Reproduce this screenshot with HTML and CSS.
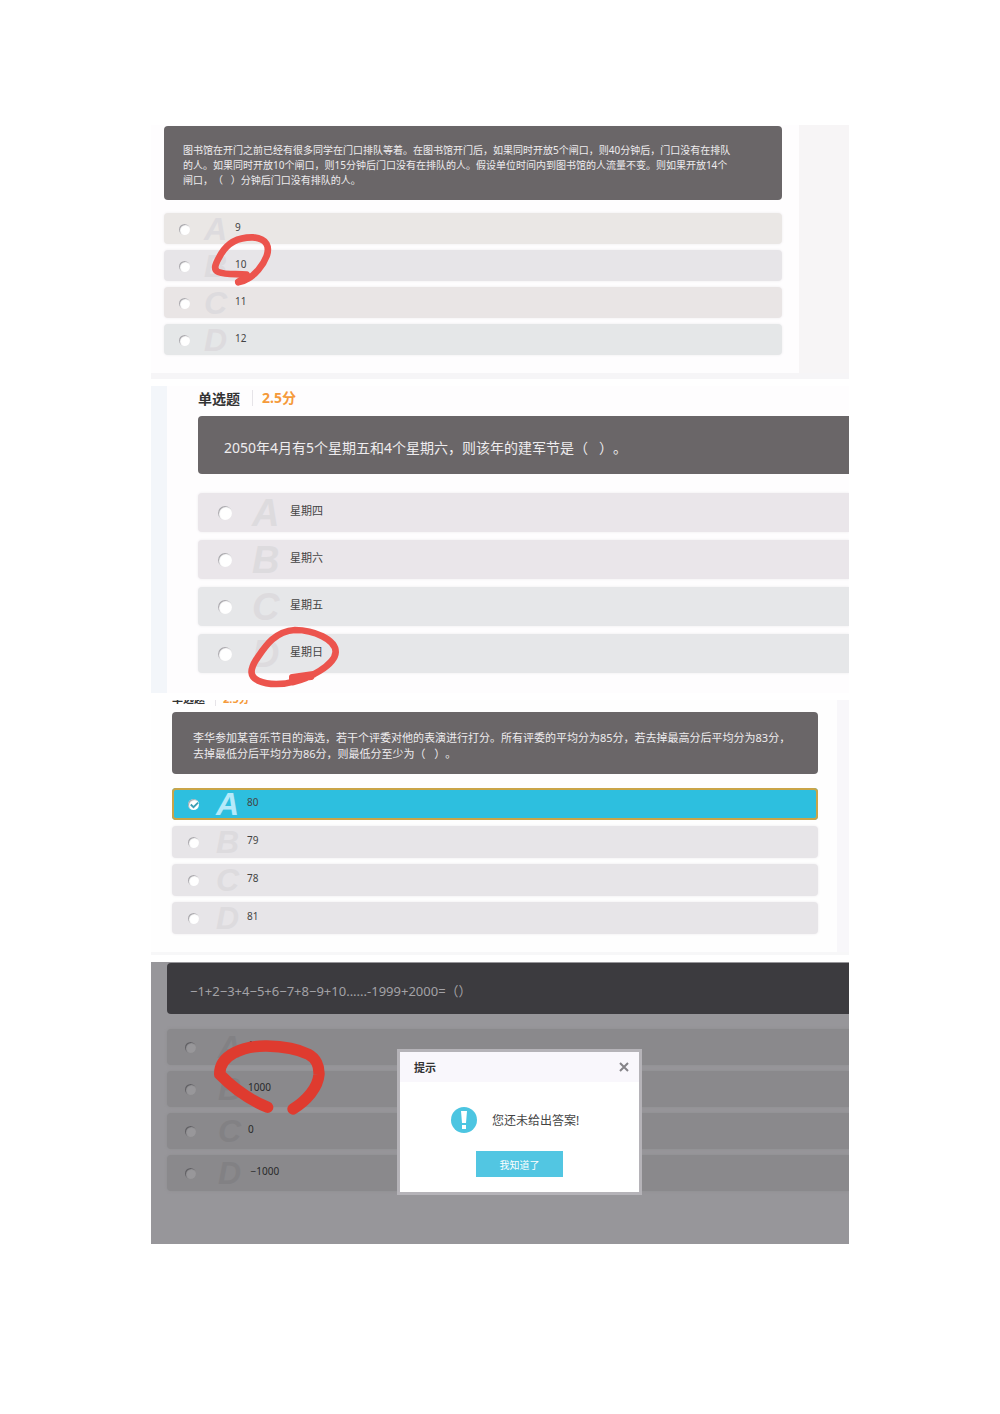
FILE: index.html
```html
<!DOCTYPE html>
<html lang="zh-CN">
<head>
  <meta charset="UTF-8">
  <title>单选题</title>
  <link rel="stylesheet" href="styles.css">
</head>
<body>

  <section class="panel panel-library">
    <div class="question">图书馆在开门之前已经有很多同学在门口排队等着。在图书馆开门后，如果同时开放5个闸口，则40分钟后，门口没有在排队<br>的人。如果同时开放10个闸口，则15分钟后门口没有在排队的人。假设单位时间内到图书馆的人流量不变。则如果开放14个<br>闸口，（&nbsp;&nbsp;&nbsp;）分钟后门口没有排队的人。</div>
    <div class="options">
      <label class="option"><input type="radio" name="q1"><span class="letter">A</span><span class="text">9</span></label>
      <label class="option"><input type="radio" name="q1"><span class="letter">B</span><span class="text">10</span></label>
      <label class="option"><input type="radio" name="q1"><span class="letter">C</span><span class="text">11</span></label>
      <label class="option"><input type="radio" name="q1"><span class="letter">D</span><span class="text">12</span></label>
    </div>
    <svg class="mark" viewBox="0 0 192 168">
      <path d="M106 128 C80 124 48 130 22 120 C2 112 18 88 30 66 C50 32 84 15 126 16 C170 20 176 46 167 72 C156 102 130 130 110 140 Q98 148 82 151"/>
      <path d="M82 149 L108 132"/>
    </svg>
  </section>

  <section class="panel panel-weekday">
    <div class="head"><span class="type">单选题</span><span class="score">2.5分</span></div>
    <div class="question">2050年4月有5个星期五和4个星期六，则该年的建军节是（&nbsp;&nbsp;&nbsp;）。</div>
    <div class="options">
      <label class="option"><input type="radio" name="q2"><span class="letter">A</span><span class="text">星期四</span></label>
      <label class="option"><input type="radio" name="q2"><span class="letter">B</span><span class="text">星期六</span></label>
      <label class="option"><input type="radio" name="q2"><span class="letter">C</span><span class="text">星期五</span></label>
      <label class="option"><input type="radio" name="q2"><span class="letter">D</span><span class="text">星期日</span></label>
    </div>
    <svg class="mark" viewBox="0 0 288 216">
      <path d="M142 172 L205 163 M142 177 L198 170 M145 186 C190 176 270 136 272 96 C272 58 206 30 150 30 C88 34 60 80 34 118 C14 150 14 170 40 182 C70 196 116 194 150 184"/>
    </svg>
  </section>

  <section class="panel panel-judges">
    <div class="head"><span class="type">单选题</span><span class="score">2.5分</span></div>
    <div class="question">李华参加某音乐节目的海选，若干个评委对他的表演进行打分。所有评委的平均分为85分，若去掉最高分后平均分为83分，<br>去掉最低分后平均分为86分，则最低分至少为（&nbsp;&nbsp;&nbsp;）。</div>
    <div class="options">
      <label class="option"><input type="radio" name="q3" checked><span class="letter">A</span><span class="text">80</span></label>
      <label class="option"><input type="radio" name="q3"><span class="letter">B</span><span class="text">79</span></label>
      <label class="option"><input type="radio" name="q3"><span class="letter">C</span><span class="text">78</span></label>
      <label class="option"><input type="radio" name="q3"><span class="letter">D</span><span class="text">81</span></label>
    </div>
  </section>

  <section class="panel panel-sum">
    <div class="question">−1+2−3+4−5+6−7+8−9+10......-1999+2000=（）</div>
    <div class="options">
      <label class="option"><input type="radio" name="q4"><span class="letter">A</span><span class="text">1</span></label>
      <label class="option"><input type="radio" name="q4"><span class="letter">B</span><span class="text">1000</span></label>
      <label class="option"><input type="radio" name="q4"><span class="letter">C</span><span class="text">0</span></label>
      <label class="option"><input type="radio" name="q4"><span class="letter">D</span><span class="text">&nbsp;−1000</span></label>
    </div>
    <svg class="mark" viewBox="0 0 360 252">
      <path d="M173 217 C120 195 70 160 29 118 C28 60 100 32 170 33 C230 34 268 44 295 58 C318 70 328 94 327 118 C324 158 290 196 249 222"/>
    </svg>

    <div class="dialog" role="dialog" aria-labelledby="dialogTitle">
      <div class="dialog-head">
        <span id="dialogTitle">提示</span>
        <button class="close-btn" type="button" aria-label="关闭">
          <svg viewBox="0 0 10 10"><path d="M1 1 L9 9 M9 1 L1 9"/></svg>
        </button>
      </div>
      <div class="dialog-body">
        <svg class="alert-icon" viewBox="0 0 26 26">
          <circle cx="13" cy="13" r="13"/>
          <path d="M10 4 H16 L15 16 H11 Z M11 18 H15 V22 H11 Z"/>
        </svg>
        <span>您还未给出答案!</span>
      </div>
      <button class="ok-btn" type="button">我知道了</button>
    </div>
  </section>

</body>
</html>
```
FILE: styles.css
```css
body {
  margin: 0;
  padding: 125px 151px 170px;
  display: flex;
  flex-direction: column;
  gap: 7px;
  background: #fff;
  color: #444;
  font-family: "Noto Sans", "Noto Sans CJK SC", sans-serif;
  text-spacing-trim: space-all;
}

.panel {
  position: relative;
  box-sizing: border-box;
  overflow: hidden;
  background: #fefdfe;
}

.question {
  background: #6a6668;
  color: #eeecee;
  border-radius: 4px;
  white-space: nowrap;
}

.head {
  display: flex;
  align-items: center;
  font-weight: bold;
  color: #333;
}

.score {
  color: #f59a3a;
  border-left: 1px solid #e6e4e8;
}

/* 选项 */
.options {
  display: grid;
  gap: 6px;
}

.option {
  display: grid;
  align-items: center;
  box-sizing: border-box;
  border-radius: 4px;
  background: #e7e5e8;
  box-shadow: 0 0 3px #eeecef;
  font-size: 10px;
}

.option input {
  appearance: none;
  width: 11px;
  height: 11px;
  margin: 1px 0 0;
  border-radius: 50%;
  background: #fff;
  box-shadow: inset 1px 1px 1px #a5a3a8;
}

.letter {
  color: #dddbde;
  font-family: "Liberation Sans", sans-serif;
  font-size: 32px;
  line-height: 30px;
  font-weight: bold;
  font-style: italic;
}

.text {
  line-height: 16px;
  padding-bottom: 4px;
}

/* 红笔圈 */
.mark {
  position: absolute;
  fill: none;
  stroke: #ec544d;
  stroke-width: 20;
  stroke-linecap: round;
  stroke-linejoin: round;
}

/* 第一题 */
.panel-library {
  padding: 1px 67px 18px 13px;
  border-bottom: 6px solid #f6f5f7;
  background: linear-gradient(to right, #fefdfe calc(100% - 50px), #f7f5f6 calc(100% - 50px));
}

.panel-library .question {
  padding: 17px 19px 12px;
  margin-bottom: 13px;
  font-size: 10px;
  line-height: 15px;
}

.panel-library .option {
  height: 31px;
  padding-left: 15px;
  grid-template-columns: 25px 31px 1fr;
}

.panel-library .option:nth-child(1) {
  background: #eae7e5;
}

.panel-library .option:nth-child(3) {
  background: #e9e5e5;
}

.panel-library .option:nth-child(4) {
  background: #e5e7e8;
}

.panel-library .mark {
  left: 60px;
  top: 107px;
  width: 64px;
  height: 56px;
}

/* 第二题 */
.panel-weekday {
  padding: 0 0 20px 47px;
  background: linear-gradient(to right, #f3f6fa 16px, #fefdfe 16px);
}

.panel-weekday .head {
  height: 24px;
  padding-bottom: 6px;
  font-size: 14px;
}

.panel-weekday .score {
  margin-left: 12px;
  padding-left: 9px;
  line-height: 16px;
}

.panel-weekday .question {
  padding: 22px 26px 16px;
  margin-bottom: 19px;
  border-radius: 4px 0 0 4px;
  font-size: 14px;
  line-height: 20px;
}

.panel-weekday .options {
  gap: 8px;
}

.panel-weekday .option {
  height: 39px;
  padding-left: 20px;
  grid-template-columns: 34px 38px 1fr;
  border-radius: 4px 0 0 4px;
  background: #eae6ea;
  font-size: 11px;
}

.panel-weekday .option:nth-child(n+3) {
  background: #e6e7e9;
}

.panel-weekday .option input {
  width: 14px;
  height: 14px;
}

.panel-weekday .letter {
  font-size: 38px;
}

.panel-weekday .mark {
  left: 94px;
  top: 234px;
  width: 96px;
  height: 72px;
}

/* 第三题 */
.panel-judges {
  padding: 0 31px 18px 21px;
  border-bottom: 3px solid #f7f7f8;
  background: linear-gradient(to right, #fefefe calc(100% - 12px), #f8f7fa calc(100% - 12px));
}

.panel-judges .head {
  height: 14px;
  margin-top: -9px;
  padding-bottom: 7px;
  font-size: 11px;
}

.panel-judges .score {
  margin-left: 10px;
  padding-left: 7px;
}

.panel-judges .question {
  padding: 18px 21px 12px;
  margin-bottom: 14px;
  font-size: 11px;
  line-height: 16px;
}

.panel-judges .option {
  height: 32px;
  padding-left: 16px;
  grid-template-columns: 28px 31px 1fr;
}

.panel-judges .option:has(input:checked) {
  background: #2dbfdf;
  box-shadow: inset 0 0 0 2px #c9a548;
}

.option:has(input:checked) .letter {
  color: #b5eafa;
}

.option input:checked {
  background: #fff url("data:image/svg+xml,%3Csvg xmlns='http://www.w3.org/2000/svg' viewBox='0 0 12 12'%3E%3Cpath d='M3 6l3 3 5-5' fill='none' stroke='%233d9eb5' stroke-width='2'/%3E%3C/svg%3E");
}

/* 第四题 */
.panel-sum {
  padding: 1px 0 53px 16px;
  background: #97969a;
}

.panel-sum .question {
  padding: 18px 23px 13px;
  margin-bottom: 15px;
  border-radius: 4px 0 0 4px;
  background: #3c3b3f;
  color: #a3a2a6;
  font-size: 13px;
  line-height: 20px;
}

.panel-sum .option {
  height: 36px;
  padding-left: 18px;
  grid-template-columns: 33px 30px 1fr;
  border-radius: 4px 0 0 4px;
  background: #8a898c;
  box-shadow: 0 0 3px #8f8e91;
  color: #29292b;
}

.panel-sum .option input {
  background: #98979a;
  box-shadow: inset 1px 1px 1px #5d5c60;
}

.panel-sum .letter {
  color: #828184;
}

.panel-sum .mark {
  left: 59px;
  top: 73px;
  width: 120px;
  height: 84px;
  stroke: #df3b2f;
  stroke-width: 34;
}

/* 提示弹窗 */
.dialog {
  position: absolute;
  left: 246px;
  top: 87px;
  width: 239px;
  border: 3px solid #b5b3b8;
  padding-bottom: 15px;
  background: #fff;
  text-align: center;
}

.dialog-head {
  display: flex;
  align-items: center;
  justify-content: space-between;
  height: 30px;
  padding: 0 10px 0 14px;
  background: #f9f7fc;
  color: #333;
  font-size: 11px;
  font-weight: bold;
}

.close-btn {
  display: flex;
  padding: 0;
  border: none;
  background: none;
  cursor: pointer;
}

.close-btn svg {
  width: 10px;
  height: 10px;
  stroke: #858388;
  stroke-width: 2;
}

.dialog-body {
  display: flex;
  align-items: center;
  gap: 15px;
  padding: 25px 0 18px 51px;
  font-size: 12px;
}

.alert-icon {
  width: 26px;
  height: 26px;
  fill: #4cc5e1;
}

.alert-icon path {
  fill: #fff;
}

.ok-btn {
  width: 87px;
  height: 26px;
  padding: 0;
  border: none;
  background: #52c6e2;
  color: #fff;
  font-family: inherit;
  font-size: 10px;
  cursor: pointer;
}
```
